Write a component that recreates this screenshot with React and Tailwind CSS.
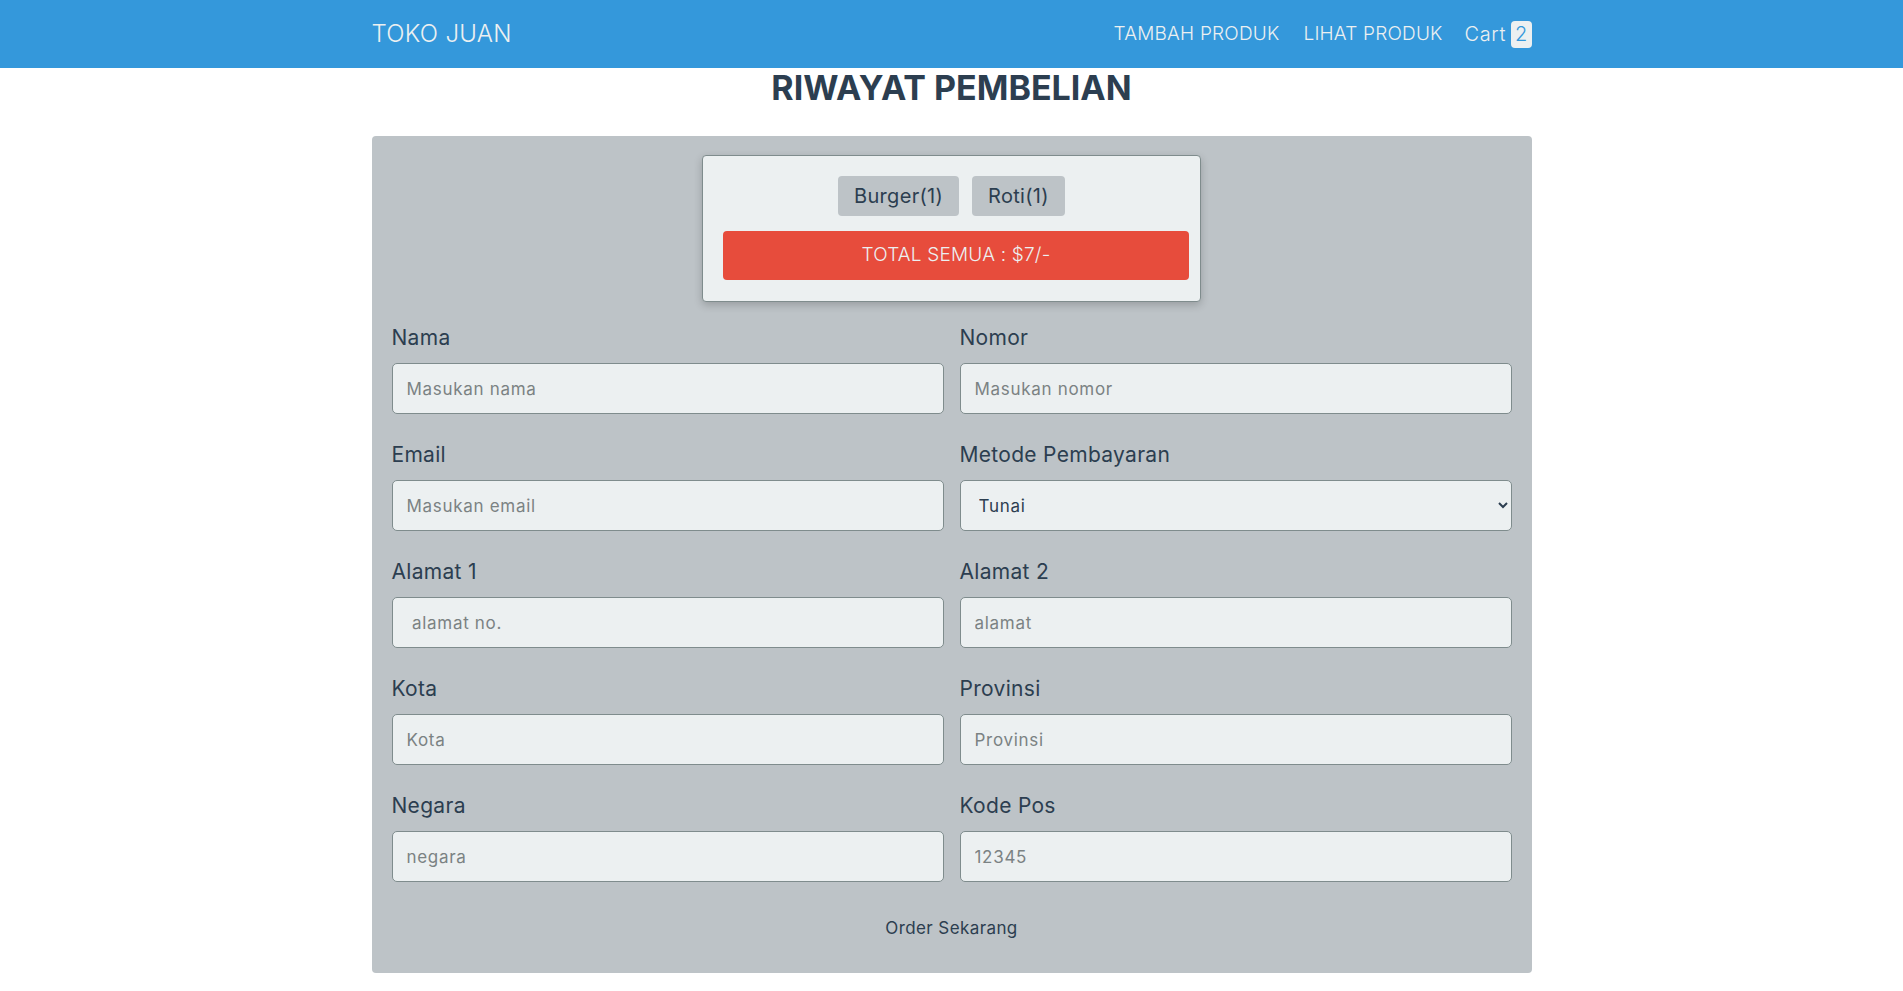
import { useState } from "react";

const fields = [
  { label: "Nama", placeholder: "Masukan nama" },
  { label: "Nomor", placeholder: "Masukan nomor" },
  { label: "Email", placeholder: "Masukan email" },
  { label: "Metode Pembayaran", select: true },
  { label: "Alamat 1", placeholder: " alamat no." },
  { label: "Alamat 2", placeholder: "alamat" },
  { label: "Kota", placeholder: "Kota" },
  { label: "Provinsi", placeholder: "Provinsi" },
  { label: "Negara", placeholder: "negara" },
  { label: "Kode Pos", placeholder: "12345" },
];

const cart = [
  { name: "Burger", qty: 1 },
  { name: "Roti", qty: 1 },
];

const App = () => {
  const [metode, setMetode] = useState("Tunai");

  return (
    <div className="min-h-screen bg-white font-['Inter',sans-serif] text-[#2c3e50]">
      <nav className="h-[68px] bg-[#3498db]">
        <div className="mx-auto flex h-full w-[1160px] items-center justify-between">
          <a className="text-[24px] font-light tracking-[0.3px] text-[#ecf0f1]">TOKO JUAN</a>
          <div className="flex items-center text-[19px] font-light tracking-[0.2px] text-[#ecf0f1]">
            <a className="mr-[24px]">TAMBAH PRODUK</a>
            <a className="mr-[22px]">LIHAT PRODUK</a>
            <a className="mr-[5px] text-[20px] tracking-[0.6px]">Cart</a>
            <span className="flex h-[27px] items-center rounded-[4px] bg-[#ecf0f1] px-[4px] text-[20px] text-[#3498db]">
              2
            </span>
          </div>
        </div>
      </nav>

      <h1 className="mb-[28px] h-[40px] text-center text-[34px] leading-[40px] font-bold">
        RIWAYAT PEMBELIAN
      </h1>

      <div className="mx-auto w-[1160px] rounded-[4px] bg-[#bdc3c7] px-[20px] pt-[19px] pb-[25px]">
        <div className="mx-auto w-[499px] rounded-[4px] border border-[#7f8c8d] bg-[#ecf0f1] pt-[20px] pb-[21px] shadow-[0_3px_8px_rgba(0,0,0,0.2)]">
          <div className="flex justify-center gap-[13px]">
            {cart.map((item) => (
              <span
                key={item.name}
                className="flex h-[40px] items-center rounded-[4px] bg-[#bdc3c7] px-[16px] text-[20px] tracking-[0.3px]"
              >
                {`${item.name}(${item.qty})`}
              </span>
            ))}
          </div>
          <div className="mt-[15px] mr-[11px] ml-[20px] flex h-[49px] items-center justify-center rounded-[4px] bg-[#e74c3c] text-[19px] font-light tracking-[0.2px] text-[#ecf0f1]">
            TOTAL SEMUA : $7/-
          </div>
        </div>

        <form className="mt-[21px] grid grid-cols-2 gap-x-[16px] gap-y-[26px]">
          {fields.map((f) => (
            <div key={f.label}>
              <label className="block h-[30px] text-[21px] leading-[30px] tracking-[0.3px]">{f.label}</label>
              {f.select ? (
                <select
                  value={metode}
                  onChange={(e) => setMetode(e.target.value)}
                  className="mt-[10px] h-[51px] w-full rounded-[5px] border border-[#7f8c8d] bg-[#ecf0f1] px-[14px] text-[17px] tracking-[0.7px] text-[#2c3e50] outline-none"
                >
                  <option>Tunai</option>
                  <option>Transfer</option>
                </select>
              ) : (
                <input
                  placeholder={f.placeholder}
                  className="mt-[10px] h-[51px] w-full rounded-[5px] border border-[#7f8c8d] bg-[#ecf0f1] px-[14px] text-[17px] tracking-[0.7px] outline-none placeholder:text-[#7b8283]"
                />
              )}
            </div>
          ))}
        </form>

        <div className="mt-[26px] flex justify-center">
          <button type="button" className="py-[8px] text-[17px] leading-[24px] tracking-[0.4px] text-[#2c3e50]">
            Order Sekarang
          </button>
        </div>
      </div>
    </div>
  );
};

export default App;
